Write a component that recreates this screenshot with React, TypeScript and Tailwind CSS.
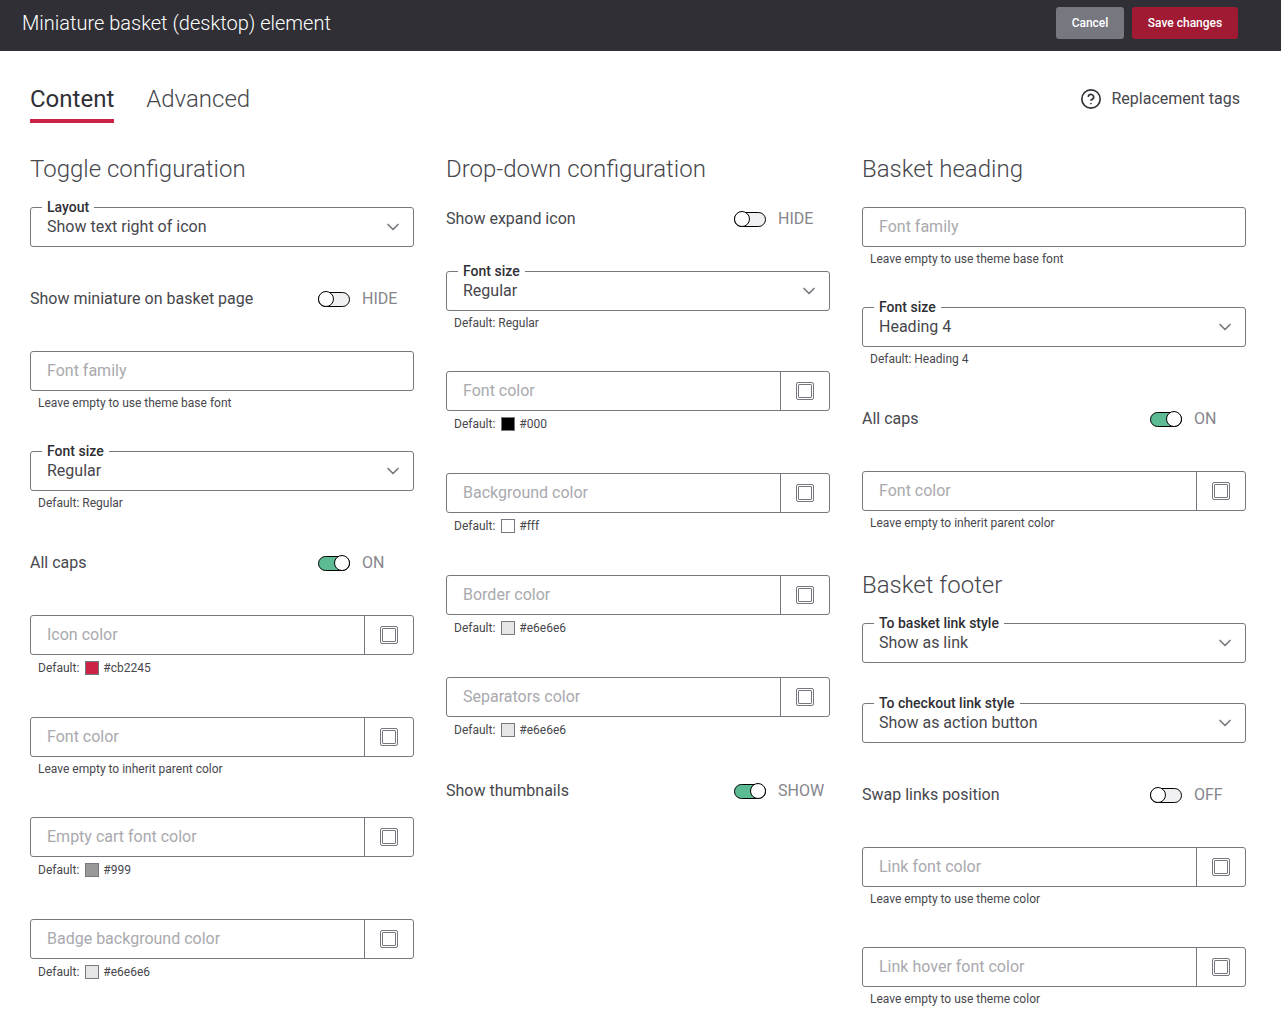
import React from 'react';
import { ChevronDown, CircleHelp } from 'lucide-react';

const Toggle = ({ on, text }: { on?: boolean; text: string }) => (
  <div className="flex items-center w-[96px] shrink-0">
    <div className={`flex h-[15px] w-[32px] items-center rounded-full border border-black ${on ? 'bg-[#5dbb93] justify-end' : 'bg-[#f0f0f2] justify-start'}`}>
      <div className="h-4 w-4 shrink-0 -mx-px rounded-full border border-black bg-white" />
    </div>
    <span className="ml-3 text-base text-[#85858c]">{text}</span>
  </div>
);

const ToggleRow = ({ label, on, text }: { label: string; on?: boolean; text: string }) => (
  <div className="mb-10 flex h-6 items-center justify-between text-base text-[#47474d]">
    <span>{label}</span>
    <Toggle on={on} text={text} />
  </div>
);

const Help = ({ text }: { text: string }) => (
  <div className="h-5 pl-2 pt-1 text-xs leading-4 text-[#47474d]">{text}</div>
);

const DefaultHelp = ({ color }: { color: string }) => (
  <div className="flex h-[22px] items-center pl-2 pt-1 text-xs text-[#47474d]">
    <span>Default:</span>
    <span className="ml-[6px] h-[14px] w-[14px] border border-[#77777f]" style={{ backgroundColor: color }} />
    <span className="ml-1">{color}</span>
  </div>
);

const SelectField = ({ label, value, help }: { label: string; value: string; help?: string }) => (
  <div className="mb-10 last:mb-0">
    <div className="relative flex h-10 items-center justify-between rounded-[3px] border border-[#77777f] pl-4 pr-[10px] text-base text-[#47474d]">
      <span className="absolute -top-[9px] left-[11px] bg-white px-[5px] text-sm leading-4 font-medium text-[#2f2f35]">{label}</span>
      <span>{value}</span>
      <ChevronDown size={20} strokeWidth={2} className="text-[#77777f]" />
    </div>
    {help && <Help text={help} />}
  </div>
);

const TextField = ({ placeholder, help }: { placeholder: string; help: string }) => (
  <div className="mb-10 last:mb-0">
    <div className="flex h-10 items-center rounded-[3px] border border-[#77777f] pl-4 text-base text-[#a9a9ae]">{placeholder}</div>
    <Help text={help} />
  </div>
);

const ColorField = ({ placeholder, help, color }: { placeholder: string; help?: string; color?: string }) => (
  <div className="mb-10 last:mb-0">
    <div className="flex h-10 items-stretch rounded-[3px] border border-[#77777f] text-base text-[#a9a9ae]">
      <div className="flex flex-1 items-center pl-4">{placeholder}</div>
      <div className="flex w-[49px] items-center justify-center border-l border-[#77777f]">
        <div className="h-[18px] w-[18px] rounded-[2px] border border-[#77777f] p-px">
          <div className="h-full w-full rounded-[1px] border border-[#77777f]" />
        </div>
      </div>
    </div>
    {color ? <DefaultHelp color={color} /> : <Help text={help ?? ''} />}
  </div>
);

const Heading = ({ children }: { children: React.ReactNode }) => (
  <h3 className="mb-5 h-9 text-2xl leading-9 font-light text-[#47474d]">{children}</h3>
);

export default function App() {
  return (
    <div className="min-h-[1019px] overflow-hidden bg-white font-['Roboto',sans-serif]">
      <header className="flex h-[51px] items-start justify-between bg-[#2f2f35] pl-[22px] pr-[43px] pt-[7px]">
        <h1 className="text-[20px] leading-8 font-light text-white">Miniature basket (desktop) element</h1>
        <div className="flex gap-2">
          <button className="h-8 w-[68px] rounded-[3px] bg-[#77777f] text-xs font-medium text-white">Cancel</button>
          <button className="h-8 w-[106px] rounded-[3px] bg-[#a01a34] text-xs font-medium text-white">Save changes</button>
        </div>
      </header>

      <div className="flex h-[72px] items-start justify-between pl-[30px] pr-[41px]">
        <div className="flex gap-8 pt-[30px] text-2xl font-light">
          <div className="h-[42px] border-b-4 border-[#cb2245] leading-9 font-normal text-[#2f2f35]">Content</div>
          <div className="leading-9 text-[#47474d]">Advanced</div>
        </div>
        <div className="mt-[36px] flex items-center gap-[9px] text-base text-[#47474d]">
          <CircleHelp size={22} strokeWidth={1.8} className="text-[#2f2f35]" />
          <span>Replacement tags</span>
        </div>
      </div>

      <div className="mt-7 grid grid-cols-[384px_384px_384px] gap-8 pl-[30px]">
        <section>
          <Heading>Toggle configuration</Heading>
          <SelectField label="Layout" value="Show text right of icon" />
          <ToggleRow label="Show miniature on basket page" text="HIDE" />
          <TextField placeholder="Font family" help="Leave empty to use theme base font" />
          <SelectField label="Font size" value="Regular" help="Default: Regular" />
          <ToggleRow label="All caps" on text="ON" />
          <ColorField placeholder="Icon color" color="#cb2245" />
          <ColorField placeholder="Font color" help="Leave empty to inherit parent color" />
          <ColorField placeholder="Empty cart font color" color="#999" />
          <ColorField placeholder="Badge background color" color="#e6e6e6" />
        </section>

        <section>
          <Heading>Drop-down configuration</Heading>
          <ToggleRow label="Show expand icon" text="HIDE" />
          <SelectField label="Font size" value="Regular" help="Default: Regular" />
          <ColorField placeholder="Font color" color="#000" />
          <ColorField placeholder="Background color" color="#fff" />
          <ColorField placeholder="Border color" color="#e6e6e6" />
          <ColorField placeholder="Separators color" color="#e6e6e6" />
          <ToggleRow label="Show thumbnails" on text="SHOW" />
        </section>

        <div>
          <section>
            <Heading>Basket heading</Heading>
            <TextField placeholder="Font family" help="Leave empty to use theme base font" />
            <SelectField label="Font size" value="Heading 4" help="Default: Heading 4" />
            <ToggleRow label="All caps" on text="ON" />
            <ColorField placeholder="Font color" help="Leave empty to inherit parent color" />
          </section>
          <section className="mt-9">
            <Heading>Basket footer</Heading>
            <SelectField label="To basket link style" value="Show as link" />
            <SelectField label="To checkout link style" value="Show as action button" />
            <ToggleRow label="Swap links position" text="OFF" />
            <ColorField placeholder="Link font color" help="Leave empty to use theme color" />
            <ColorField placeholder="Link hover font color" help="Leave empty to use theme color" />
          </section>
        </div>
      </div>
    </div>
  );
}
